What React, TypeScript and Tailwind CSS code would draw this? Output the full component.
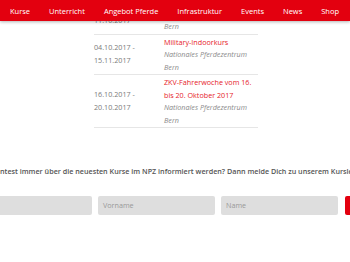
const nav = ['Kurse', 'Unterricht', 'Angebot Pferde', 'Infrastruktur', 'Events', 'News', 'Shop'];

type Row = { from: string; to: string; title: string[] };

const rows: Row[] = [
  { from: '04.10.2017 -', to: '11.10.2017', title: ['Springkurs'] },
  { from: '04.10.2017 -', to: '15.11.2017', title: ['Military-Indoorkurs'] },
  { from: '16.10.2017 -', to: '20.10.2017', title: ['ZKV-Fahrerwoche vom 16.', 'bis 20. Oktober 2017'] },
];

export default function App() {
  return (
    <div className="relative w-[350px] h-[262px] overflow-hidden bg-white font-['Open_Sans',sans-serif]">
      <header className="absolute top-0 left-0 right-0 z-10 h-[21px] bg-[#e3000f] shadow-[0_1px_3px_rgba(0,0,0,0.3)]">
        <nav className="flex items-center h-full pt-[2px] pl-[10px] gap-[19px] text-[7.5px] text-white">
          {nav.map(n => (
            <span key={n} className="whitespace-nowrap">{n}</span>
          ))}
        </nav>
      </header>

      <table className="ml-[94px] mt-[-6px] w-[164px] border-collapse text-[7.2px] leading-[12.5px]">
        <tbody>
          {rows.map((r, i) => (
            <tr key={i} className="border-b border-[#e6e6e6]">
              <td className="w-[70px] align-middle text-[#7a7a7a] leading-[13.5px] py-[1px]">
                <div>{r.from}</div>
                <div>{r.to}</div>
              </td>
              <td className="align-top py-[1px]">
                {r.title.map(t => (
                  <div key={t} className="text-[#e62129] whitespace-nowrap">{t}</div>
                ))}
                <div className="italic text-[#8a8a8a] whitespace-nowrap">Nationales Pferdezentrum</div>
                <div className="italic text-[#8a8a8a]">Bern</div>
              </td>
            </tr>
          ))}
        </tbody>
      </table>

      <p className="mt-[38px] whitespace-nowrap text-[7.2px] font-semibold text-[#555]">
        ntest immer über die neuesten Kurse im NPZ informiert werden? Dann melde Dich zu unserem Kursletter an!
      </p>

      <div className="flex gap-[6px] ml-[-25px] mt-[19px]">
        <div className="w-[117px] h-[19px] shrink-0 rounded-[2px] bg-[#dedede]" />
        <div className="w-[117px] h-[19px] shrink-0 rounded-[2px] bg-[#dedede] flex items-center pl-[5px] text-[7.2px] text-[#999]">Vorname</div>
        <div className="w-[117px] h-[19px] shrink-0 rounded-[2px] bg-[#dedede] flex items-center pl-[5px] text-[7.2px] text-[#999]">Name</div>
        <div className="w-[60px] h-[19px] shrink-0 ml-[1px] rounded-[2px] bg-[#e3000f]" />
      </div>
    </div>
  );
}
